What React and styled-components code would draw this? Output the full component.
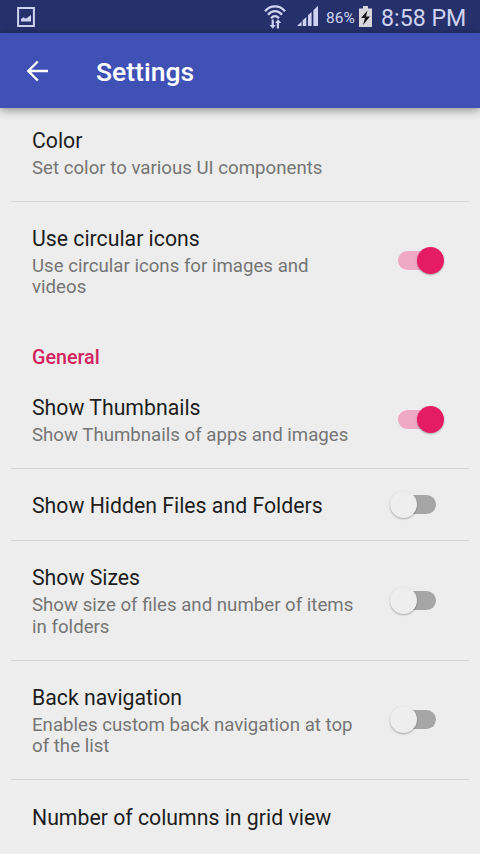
import React from 'react';
import styled, { createGlobalStyle } from 'styled-components';

const GlobalStyle = createGlobalStyle`
* {
    box-sizing: border-box;
}
body {
    margin: 0;
    background: #ededed;
    font-family: Roboto, "Noto Sans", sans-serif;
}
`

const Screen = styled.div`
width: 480px;
height: 854px;
display: flex;
flex-direction: column;
overflow: hidden;
background: #ededed;
`

const StatusBar = styled.div`
flex: none;
height: 33px;
display: flex;
align-items: center;
padding: 0 13px 0 17px;
background: #26316c;
color: #ced3f1;
`
const StatusRight = styled.div`
margin-left: auto;
display: flex;
align-items: center;
`
const Percent = styled.span`
width: 30px;
margin: 2px 3px 0 7px;
font-size: 15.5px;
line-height: 20px;
white-space: nowrap;
`
const Clock = styled.span`
width: 86px;
margin-left: 9px;
padding-top: 3px;
font-size: 23.2px;
line-height: 30px;
white-space: nowrap;
`

const Toolbar = styled.header`
flex: none;
height: 75px;
display: flex;
align-items: center;
padding-left: 26px;
background: #4051b5;
color: #fff;
box-shadow: 0 2px 9px rgba(0, 0, 0, 0.42);
z-index: 1;
`
const ToolbarTitle = styled.h1`
margin: 2px 0 0 47px;
font-size: 26.5px;
font-weight: 500;
line-height: 32px;
`

const List = styled.main`
flex: 1;
min-height: 0;
margin: -3.5px 11px 0;
overflow: hidden;
`
const Section = styled.h2`
height: 50px;
margin: 0;
padding: 24px 21px 0;
font-size: 19.7px;
font-weight: 500;
line-height: 25px;
color: #d3235f;
`
const Row = styled.div`
height: ${({ $height }) => $height}px;
display: flex;
align-items: center;
justify-content: space-between;
padding: 0 33px 0 21px;
border-bottom: 1px solid ${({ $plain }) => ($plain ? 'transparent' : '#d6d6d6')};
`
const RowText = styled.div`
display: flex;
flex-direction: column;
gap: 5px;
padding-top: 3px;
`
const RowTitle = styled.div`
font-size: 21.25px;
line-height: 25px;
color: #1d1d1d;
white-space: nowrap;
`
const RowSummary = styled.div`
font-size: 18.67px;
line-height: 21.7px;
color: #757575;
white-space: pre-line;
`

const Track = styled.div`
flex: none;
width: 38px;
height: 19px;
border-radius: 10px;
display: flex;
align-items: center;
justify-content: ${({ $on }) => ($on ? 'flex-end' : 'flex-start')};
background: ${({ $on }) => ($on ? '#efa9c3' : '#a6a6a6')};
`
const Thumb = styled.div`
flex: none;
width: 27px;
height: 27px;
margin: 0 -8px;
border-radius: 50%;
background: ${({ $on }) => ($on ? '#e61c62' : '#eeeeee')};
box-shadow: 0 1px 2px rgba(0, 0, 0, 0.3);
`

const Switch = ({ on }) => {

    return (
        <Track $on={on} role="switch" aria-checked={on}>
            <Thumb $on={on} />
        </Track>
    )
}

const Setting = ({ title, summary, height, on, plain }) => {

    return (
        <Row $height={height} $plain={plain}>
            <RowText>
                <RowTitle>{title}</RowTitle>
                {summary && <RowSummary>{summary}</RowSummary>}
            </RowText>
            {on !== undefined && <Switch on={on} />}
        </Row>
    )
}

const PictureIcon = () => (
    <svg width="18" height="20" viewBox="0 0 18 20">
        <path d="M1.1 1.1h15.8v17.8H1.1z" fill="none" stroke="currentColor" strokeWidth="2" />
        <path d="M4 14.5v-2.6l2.5-1.6 2.3 1.4L14 8v6.5z" fill="currentColor" />
    </svg>
)

const WifiIcon = () => (
    <svg width="22" height="24" viewBox="0 0 22 24">
        <g fill="none" stroke="currentColor" strokeWidth="2.3">
            <path d="M1 6.3C6.4-.2 15.6-.2 21 6.3" />
            <path d="M4 9.8c4-4.8 10-4.8 14 0" />
            <path d="M7 13.2c2.4-2.7 5.6-2.7 8 0" />
        </g>
        <path d="M7.6 14.5h2.2V20h2l-3.1 3.8L5.6 20h2zM12.8 23.5V18h-1.6l2.8-3.8 3.2 3.8H15v5.5z" fill="currentColor" />
    </svg>
)

const SignalIcon = () => (
    <svg width="22" height="21" viewBox="0 0 22 21">
        <path d="M0 21l4.5-4.5V21zM5.7 15.3L9.3 12v9H5.7zM11 10.3L14.6 7v14H11zM16.4 5.3L21 .8V21h-4.6z" fill="currentColor" />
    </svg>
)

const BatteryIcon = () => (
    <svg width="13" height="21" viewBox="0 0 13 21">
        <path d="M4 0h5v2.5h4V21H0V2.5h4z" fill="#d8d8dc" />
        <path d="M8.5 4.5L2 12h4l-2 7 7-8.5H7z" fill="#151515" />
    </svg>
)

const BackArrow = () => (
    <svg width="23" height="22" viewBox="0 0 23 22">
        <path d="M22 11H2.5M11.8 1.5L2.3 11l9.5 9.5" fill="none" stroke="currentColor" strokeWidth="2.4" />
    </svg>
)

const SignalIcons = styled.div`
display: flex;
gap: 11px;
`

export default function App() {

    return (
        <Screen>
            <GlobalStyle />
            <StatusBar>
                <PictureIcon />
                <StatusRight>
                    <SignalIcons>
                        <WifiIcon />
                        <SignalIcon />
                    </SignalIcons>
                    <Percent>86%</Percent>
                    <BatteryIcon />
                    <Clock>8:58 PM</Clock>
                </StatusRight>
            </StatusBar>
            <Toolbar>
                <BackArrow />
                <ToolbarTitle>Settings</ToolbarTitle>
            </Toolbar>
            <List>
                <Setting height={97} title="Color" summary="Set color to various UI components" />
                <Setting height={119.5} title="Use circular icons" summary={"Use circular icons for images and\nvideos"} on={true} plain />
                <Section>General</Section>
                <Setting height={97.5} title="Show Thumbnails" summary="Show Thumbnails of apps and images" on={true} />
                <Setting height={72.5} title="Show Hidden Files and Folders" on={false} />
                <Setting height={119.5} title="Show Sizes" summary={"Show size of files and number of items\nin folders"} on={false} />
                <Setting height={119.5} title="Back navigation" summary={"Enables custom back navigation at top\nof the list"} on={false} />
                <Setting height={72.5} title="Number of columns in grid view" plain />
            </List>
        </Screen>
    )
}
